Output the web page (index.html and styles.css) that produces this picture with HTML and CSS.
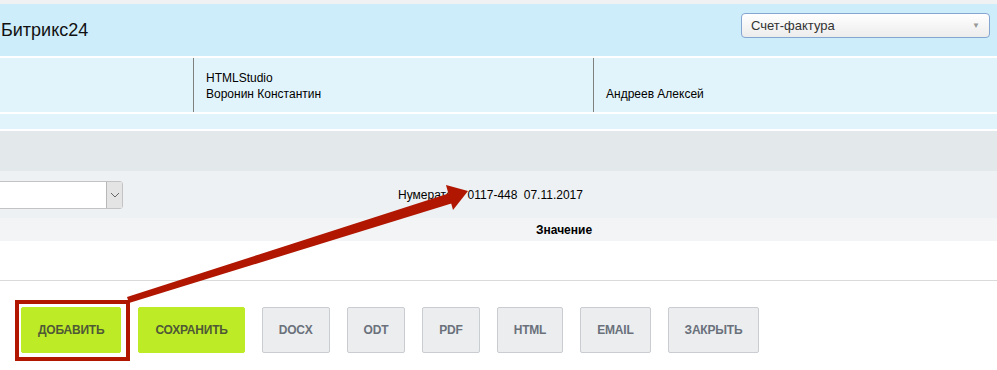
FILE: index.html
```html
<!DOCTYPE html>
<html lang="ru">
<head>
    <meta charset="UTF-8">
    <title>Счет-фактура</title>
    <link rel="stylesheet" href="styles.css">
</head>
<body>
    <div class="top-strip"></div>

    <div class="head">
        <div class="brand">Битрикс24</div>
        <div class="doc-select">
            <span>Счет-фактура</span>
            <span class="caret">&#9660;</span>
        </div>
    </div>

    <div class="parties">
        <div class="party party-empty"></div>
        <div class="party">HTMLStudio<br>Воронин Константин</div>
        <div class="party">Андреев Алексей</div>
    </div>
    <div class="sub-row"></div>

    <div class="gray-row"></div>

    <div class="num-row">
        <div class="picker">
            <span class="picker-btn">
                <svg width="10" height="6" viewBox="0 0 10 6"><path d="M1 1 L5 5 L9 1" fill="none" stroke="#666" stroke-width="1"/></svg>
            </span>
        </div>
        <div class="num-text">Нумератор <span class="num-val">0117-448</span> 07.11.2017</div>
    </div>
    <div class="th-row">
        <div class="th">Значение</div>
    </div>
    <div class="blank-row"></div>

    <div class="buttons">
        <button class="btn btn-green">Добавить</button>
        <button class="btn btn-green">Сохранить</button>
        <button class="btn">DOCX</button>
        <button class="btn">ODT</button>
        <button class="btn">PDF</button>
        <button class="btn">HTML</button>
        <button class="btn">Email</button>
        <button class="btn">Закрыть</button>
    </div>

    <!-- annotation overlay -->
    <svg class="note" width="997" height="370" viewBox="0 0 997 370">
        <rect x="17" y="302" width="111" height="57" fill="none" stroke="#b01600" stroke-width="4"/>
        <polygon points="127,297 129,303 453,203 450,193" fill="#b01600"/>
        <polygon points="446,185 468,191 453,210" fill="#b01600"/>
    </svg>
</body>
</html>
```

FILE: styles.css
```css
body {
    margin: 0;
    width: 997px;
    height: 370px;
    overflow: hidden;
    position: relative;
    background: #ffffff;
    font-family: "Liberation Sans", Arial, sans-serif;
    font-size: 12px;
    color: #000;
}
.top-strip {
    height: 4px;
    background: #eff1f2;
}
.head {
    height: 52px;
    background: #cdedfa;
    display: flex;
    align-items: center;
    justify-content: space-between;
    padding: 0 7px 0 1px;
    margin-bottom: 2px;
}
.brand {
    font-size: 18px;
    color: #111;
    padding-top: 1px;
}
.doc-select {
    width: 229px;
    height: 23px;
    border: 1px solid #86a6d2;
    border-radius: 4px;
    background: linear-gradient(#ffffff, #ececec);
    display: flex;
    align-items: center;
    justify-content: space-between;
    padding: 0 9px;
    font-size: 13px;
    color: #333;
    margin-top: -9px;
}
.caret {
    font-size: 8px;
    color: #999;
}
.parties {
    display: flex;
    height: 54px;
    background: #e2f4fb;
}
.party {
    display: flex;
    align-items: flex-end;
    padding: 0 12px 10px;
    line-height: 16px;
    width: 375px;
    border-left: 1px solid #808080;
}
.party-empty {
    width: 193px;
    padding: 0;
    border-left: none;
}
.sub-row {
    height: 15px;
    margin-top: 2px;
    background: #e2f4fb;
}
.gray-row {
    height: 40px;
    margin-top: 2px;
    background: #e3e8ea;
}
.num-row {
    height: 47px;
    background: #eef1f3;
    display: flex;
    align-items: center;
}
.picker {
    width: 131px;
    height: 26px;
    margin-left: -10px;
    background: #fff;
    border: 1px solid #c3c3c3;
    border-radius: 0 3px 3px 0;
    display: flex;
    justify-content: flex-end;
}
.picker-btn {
    width: 15px;
    background: #e4e4e4;
    border-left: 1px solid #b8b8b8;
    display: flex;
    align-items: center;
    justify-content: center;
}
.num-text {
    margin-left: 275px;
    font-size: 12px;
}
.num-val {
    margin: 0 3px 0 5px;
}
.th-row {
    height: 23px;
    background: #f3f4f6;
    display: flex;
    align-items: center;
}
.th {
    margin-left: 536px;
    font-weight: bold;
}
.blank-row {
    height: 39px;
    border-bottom: 1px solid #dadada;
}
.buttons {
    display: flex;
    gap: 17px;
    padding: 26px 0 0 21px;
}
.btn {
    height: 46px;
    padding: 0 16px;
    border: 1px solid #c9ccd0;
    border-radius: 2px;
    background: #ebedef;
    color: #6a717b;
    font-family: "Liberation Sans", Arial, sans-serif;
    font-size: 12px;
    font-weight: bold;
    letter-spacing: -0.2px;
    text-transform: uppercase;
}
.btn-green {
    background: #bdeb26;
    border-color: #bdeb26;
    color: #4f5936;
}
.note {
    position: absolute;
    left: 0;
    top: 0;
    pointer-events: none;
}
```
